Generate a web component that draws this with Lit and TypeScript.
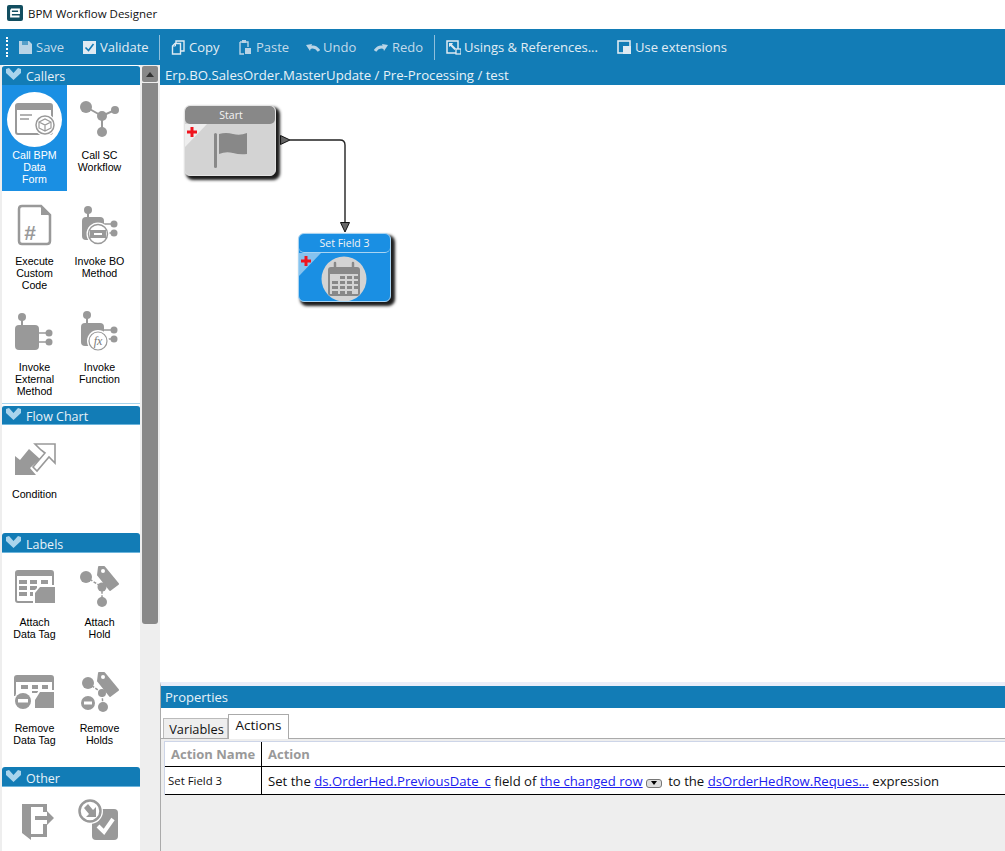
import { LitElement, html, css, svg } from 'lit';
import { customElement } from 'lit/decorators.js';
import { classMap } from 'lit/directives/class-map.js';

const G = '#999999';

// palette icons are drawn in page coordinates, the viewBox crops them to their cell
const pin = (px: number, py: number, x: number, y: number, w: number, h: number, oy: number) => svg`
  <circle cx=${px} cy=${py} r="4" fill=${G} />
  <path d="M${px} ${py} V${y}" stroke=${G} stroke-width="2" />
  <rect x=${x} y=${y} width=${w} height=${h} rx="4" fill=${G} />
  <path d="M${x + w} ${oy} H${x + w + 8} M${x + w} ${oy + 9} H${x + w + 8}" stroke=${G} stroke-width="1.5" />
  <circle cx=${x + w + 10} cy=${oy} r="3.5" fill=${G} />
  <circle cx=${x + w + 10} cy=${oy + 9} r="3.5" fill=${G} />
`;

const tag = (d: number) => svg`
  <path d="M99 ${567 + d} H104 L118 ${584 + d} L110 ${590 + d} L98 ${575 + d} Z" fill=${G} stroke=${G} stroke-width="2" stroke-linejoin="round" />
  <circle cx="103" cy=${571 + d} r="2" fill="#fff" />
`;

const ICONS: Record<string, unknown> = {
  form: svg`
    <circle cx="34.5" cy="119.5" r="27.5" fill="#fff" />
    <rect x="16" y="104" width="36" height="30" rx="2" fill="none" stroke=${G} stroke-width="2" />
    <rect x="16" y="104" width="36" height="6" fill=${G} />
    <path d="M20 115 H32 M20 119 H29" stroke=${G} stroke-width="1.5" />
    <circle cx="45" cy="125" r="11" fill="#fff" />
    <circle cx="45" cy="125" r="9" fill="#fff" stroke=${G} stroke-width="1.5" />
    <path d="M39 122 L45 119 L51 122 V128 L45 131 L39 128 Z M39 122 L45 125 L51 122 M45 125 V131" fill="none" stroke=${G} stroke-width="1.2" />
  `,
  workflow: svg`
    <path d="M86 107 L102 116 L115 110 M102 116 V132" stroke=${G} stroke-width="2" fill="none" />
    <circle cx="86" cy="107" r="6" fill=${G} />
    <circle cx="115" cy="110" r="4" fill=${G} />
    <circle cx="102" cy="116" r="5" fill=${G} />
    <circle cx="102" cy="132" r="5" fill=${G} />
  `,
  code: svg`
    <path d="M22 206 H41 L50 215 V241 Q50 244 47 244 H22 Q19 244 19 241 V209 Q19 206 22 206 Z" fill="none" stroke=${G} stroke-width="2.5" />
    <path d="M41 205 L51 215 H41 Z" fill=${G} />
    <text x="30" y="240" class="glyph" font-size="21" text-anchor="middle">#</text>
  `,
  bo: svg`
    ${pin(88, 210, 82, 217, 22, 23, 224)}
    <circle cx="98" cy="234" r="11.5" fill="#fff" />
    <circle cx="98" cy="234" r="9.5" fill="#fff" stroke=${G} stroke-width="1.5" />
    <rect x="90" y="230" width="16" height="8" fill=${G} />
    <rect x="94" y="233" width="8" height="2" fill="#fff" />
  `,
  external: svg`${pin(22, 317, 15, 325, 24, 25, 333)}`,
  fn: svg`
    ${pin(87, 315, 81, 323, 23, 23, 330)}
    <circle cx="98" cy="341" r="11" fill="#fff" />
    <circle cx="98" cy="341" r="9" fill="#fff" stroke=${G} stroke-width="1.2" />
    <text x="98" y="345" class="fx" font-size="12" text-anchor="middle">fx</text>
  `,
  condition: svg`
    <path d="M15 456 L20 460 L29 449 L40 459 L30 468 L36 475 H15 Z" fill=${G} />
    <path d="M41 450 L35 444 H55 V463 L49 457 L37 471 L33 467 L45 453 Z" fill="none" stroke=${G} stroke-width="1.6" />
  `,
  attachTag: svg`
    <rect x="16" y="571" width="37" height="31" rx="2" fill="none" stroke=${G} stroke-width="2" />
    <rect x="16" y="571" width="37" height="5" fill=${G} />
    <path d="M19 580 h8 v4 h-8 Z M30 580 h7 v4 h-7 Z M41 580 h7 v4 h-7 Z M19 586 h8 v4 h-8 Z M30 586 h7 v4 h-7 Z M19 592 h8 v4 h-8 Z M30 592 h4 v4 h-4 Z" fill=${G} />
    <path d="M33 604 V592 L40 585 H57 V604 Z" fill="#fff" />
    <path d="M35 603 V593 L40 587 H55 V603 Z" fill=${G} />
  `,
  attachHold: svg`
    <path d="M86 577 L102 587 V602" stroke=${G} stroke-width="1.5" stroke-dasharray="3 1.5" fill="none" />
    <circle cx="86" cy="577" r="6" fill=${G} />
    <circle cx="102" cy="587" r="4.5" fill=${G} />
    <circle cx="102" cy="602" r="5" fill=${G} />
    ${tag(0)}
  `,
  removeTag: svg`
    <path d="M15 696 V678 Q15 676 17 676 H51 Q53 676 53 678 V692" fill="none" stroke=${G} stroke-width="2" />
    <rect x="15" y="676" width="38" height="6" fill=${G} />
    <path d="M21 685 h7 v4 h-7 Z M32 685 h6 v4 h-6 Z M42 685 h6 v4 h-6 Z M32 691 h6 v2 h-6 Z" fill=${G} />
    <path d="M33 710 V699 L39 690 H56 V710 Z" fill="#fff" />
    <path d="M35 708 V700 L40 692 H54 V708 Z" fill=${G} />
    <circle cx="23" cy="701" r="9.5" fill="#fff" />
    <circle cx="23" cy="701" r="8" fill=${G} />
    <rect x="18" y="699" width="10" height="3.5" fill="#fff" />
  `,
  removeHold: svg`
    <path d="M88 683 L102 693 L103 707" stroke=${G} stroke-width="1.5" stroke-dasharray="3 1.5" fill="none" />
    <circle cx="88" cy="683" r="6" fill=${G} />
    <circle cx="102" cy="693" r="4" fill=${G} />
    <circle cx="103" cy="707" r="5" fill=${G} />
    ${tag(106)}
    <circle cx="88" cy="703" r="7" fill=${G} />
    <rect x="84" y="701.5" width="8" height="3" fill="#fff" />
  `,
  exit: svg`
    <path d="M22 804 H47 V812 H43 V807 H31 V834 H43 V824 H47 V837 H31 V840 L22 833 Z" fill=${G} />
    <path d="M35 816 H47 V811 L54 818 L47 825 V820 H35 Z" fill=${G} />
  `,
  validate: svg`
    <rect x="92" y="809" width="26" height="31" rx="4" fill=${G} />
    <path d="M98 826 L104 832 L113 819" fill="none" stroke="#fff" stroke-width="4" />
    <circle cx="90" cy="811" r="13" fill="#fff" />
    <circle cx="90" cy="811" r="10.5" fill="#fff" stroke=${G} stroke-width="2.5" />
    <path d="M84 808 L88 804 L93 810 L96 807 V817 H86 L89 814 Z" fill=${G} />
  `,
};

type Tool = { icon: string; label: string[]; selected?: boolean };

const GROUPS: { title: string; inset?: boolean; rule?: boolean; top: number; tools: Tool[] }[] = [
  {
    title: 'Callers', inset: true, rule: true, top: 85, tools: [
      { icon: 'form', label: ['Call BPM', 'Data', 'Form'], selected: true },
      { icon: 'workflow', label: ['Call SC', 'Workflow'] },
      { icon: 'code', label: ['Execute', 'Custom', 'Code'] },
      { icon: 'bo', label: ['Invoke BO', 'Method'] },
      { icon: 'external', label: ['Invoke', 'External', 'Method'] },
      { icon: 'fn', label: ['Invoke', 'Function'] },
    ],
  },
  {
    title: 'Flow Chart', inset: true, top: 425, tools: [
      { icon: 'condition', label: ['Condition'] },
    ],
  },
  {
    title: 'Labels', top: 553, tools: [
      { icon: 'attachTag', label: ['Attach', 'Data Tag'] },
      { icon: 'attachHold', label: ['Attach', 'Hold'] },
      { icon: 'removeTag', label: ['Remove', 'Data Tag'] },
      { icon: 'removeHold', label: ['Remove', 'Holds'] },
    ],
  },
  {
    title: 'Other', top: 787, tools: [
      { icon: 'exit', label: [] },
      { icon: 'validate', label: [] },
    ],
  },
];

const W = '#dfeaf2';
const M = '#b9d4e6'; // muted icons of the disabled buttons
const BUTTONS: { label: string; width: number; muted?: boolean; icon: unknown }[] = [
  {
    label: 'Save', width: 64, muted: true, icon: svg`
    <path d="M1 2 H11 L14 5 V15 H1 Z" fill=${M} />
    <rect x="4" y="2" width="6" height="4" fill="#127cb6" opacity=".6" />`,
  },
  {
    label: 'Validate', width: 77, icon: svg`
    <rect x="1" y="2" width="13" height="13" fill=${W} />
    <path d="M3.5 8.5 L6.5 11.5 L11.5 5" fill="none" stroke="#127cb6" stroke-width="1.6" />`,
  },
  {
    label: 'Copy', width: 67, icon: svg`
    <path d="M5 5 V2 H13 V12 H9" fill="none" stroke=${W} stroke-width="1.4" />
    <path d="M1.5 7 L4 4.5 H9.5 V15 H1.5 Z" fill="none" stroke=${W} stroke-width="1.4" />
    <path d="M2 7 H4.5 V4.5" fill="none" stroke=${W} />`,
  },
  {
    label: 'Paste', width: 67, muted: true, icon: svg`
    <path d="M2 3 H10 V8 M6 15 H2 V3" fill="none" stroke=${M} stroke-width="1.4" />
    <rect x="4" y="1" width="4" height="3" fill=${M} />
    <rect x="7" y="9" width="6" height="6" fill=${M} />`,
  },
  {
    label: 'Undo', width: 69, muted: true, icon: svg`
    <path d="M14 12 Q10 6 4 9" fill="none" stroke=${M} stroke-width="3" />
    <path d="M1 6 L7 5 L5 12 Z" fill=${M} />`,
  },
  {
    label: 'Redo', width: 60, muted: true, icon: svg`
    <path d="M1 12 Q5 6 11 9" fill="none" stroke=${M} stroke-width="3" />
    <path d="M14 6 L8 5 L10 12 Z" fill=${M} />`,
  },
  {
    label: 'Usings & References...', width: 171, icon: svg`
    <rect x="1" y="2" width="11" height="12" fill="none" stroke=${W} stroke-width="1.5" />
    <path d="M3 4 H7 L6 5.5 L10 9.5 L8.5 11 L4.5 7 L3 8 Z" fill=${W} />
    <rect x="10" y="10" width="5" height="5" fill="#127cb6" stroke=${W} stroke-width="1.3" />`,
  },
  {
    label: 'Use extensions', width: 120, icon: svg`
    <rect x="1" y="2" width="12" height="12" fill="none" stroke=${W} stroke-width="1.6" />
    <rect x="6" y="7" width="8" height="8" fill=${W} />`,
  },
];

const SEPARATOR_AFTER = ['Validate', 'Redo'];

const CHEVRON = html`<svg class="chevron" width="15" height="12" viewBox="0 0 15 12">
  <path d="M0 1 L3 0 L7.5 5 L12 0 L15 1 V5 L7.5 12 L0 5 Z" fill="#a9d4ec" />
</svg>`;

const PLUS = html`<svg class="plus" width="10" height="10" viewBox="0 0 10 10">
  <path d="M3.5 0 H6.5 V3.5 H10 V6.5 H6.5 V10 H3.5 V6.5 H0 V3.5 H3.5 Z" fill="#f0141e" />
</svg>`;

@customElement('app-root')
export class AppRoot extends LitElement {
  static styles = css`
    :host {
      display: flex;
      flex-direction: column;
      width: 1005px;
      height: 851px;
      overflow: hidden;
      background: #fff;
      font-family: 'Open Sans', sans-serif;
    }

    /* Title bar */
    .title {
      height: 29px;
      flex: none;
      display: flex;
      align-items: center;
      gap: 5px;
      padding: 0 0 3px 7px;
      box-sizing: border-box;
      font-size: 11.5px;
      color: #111;
    }

    /* Toolbar */
    .toolbar {
      height: 36px;
      flex: none;
      display: flex;
      align-items: center;
      background: #127cb6;
      color: #e3edf4;
      font-size: 13px;
      padding-left: 6px;
      box-sizing: border-box;
    }

    .grip {
      width: 2px;
      height: 20px;
      margin-right: 10px;
      border-left: 2px dotted #fff;
      box-sizing: border-box;
    }

    .tool-btn {
      display: flex;
      align-items: center;
      gap: 3px;
      flex: none;
      box-sizing: border-box;
      white-space: nowrap;
    }

    .tool-btn.muted {
      color: #c4dbea;
    }

    .tool-sep {
      width: 1px;
      height: 25px;
      background: #8fbfdc;
      flex: none;
      margin-right: 11px;
    }

    .main {
      flex: 1;
      display: flex;
      min-height: 0;
    }

    /* Left palette */
    .side {
      width: 160px;
      flex: none;
      display: flex;
      background: #eee;
      padding-left: 2px;
      box-sizing: border-box;
    }

    .palette {
      width: 138px;
      flex: none;
      background: #fff;
      overflow: hidden;
    }

    .group-head {
      height: 20px;
      box-sizing: border-box;
      display: flex;
      align-items: center;
      gap: 5px;
      padding: 3px 0 0 4px;
      background: #127cb6;
      border-radius: 3px 3px 0 0;
      border-bottom: 1px solid #6db5dc;
      color: #e8f2f8;
      font-size: 12.5px;
      margin-top: 2px;
    }

    .group-head.inset {
      border-top: 1px solid #fff;
      margin-top: 0;
      padding-top: 2px;
    }

    .group-head.first {
      border-bottom-color: #127cb6;
    }

    .group-head .chevron {
      margin-top: -4px;
    }

    .tools {
      display: grid;
      grid-template-columns: 65px 65px;
      grid-auto-rows: 106px;
      align-content: start;
    }

    .tools.rule {
      height: 318px;
      border-bottom: 1px solid #a9d4ec;
      box-sizing: content-box;
      margin-bottom: 1px;
    }

    .tool {
      display: flex;
      flex-direction: column;
      align-items: center;
      font-family: 'Liberation Sans', Arial, sans-serif;
      font-size: 10.67px;
      line-height: 12px;
      color: #000;
      text-align: center;
    }

    .tool.selected {
      background: #1a8fe3;
      color: #fff;
    }

    .tool svg {
      display: block;
      flex: none;
    }

    .glyph {
      font-family: 'Liberation Sans', sans-serif;
      font-weight: 700;
      fill: #999;
    }

    .fx {
      font-family: 'Liberation Serif', serif;
      font-style: italic;
      fill: #777;
    }

    .scroll {
      width: 16px;
      flex: none;
      margin: 1px 0 0 2px;
      display: flex;
      flex-direction: column;
      gap: 1px;
    }

    .scroll-up {
      height: 16px;
      background: #888;
      border-radius: 2px;
      display: flex;
      align-items: center;
      justify-content: center;
    }

    .scroll-up i {
      border: 4px solid transparent;
      border-top: 0;
      border-bottom: 5px solid #333;
    }

    .scroll-thumb {
      height: 541px;
      background: #888;
      border-radius: 0 0 3px 3px;
    }

    /* Right side */
    .right {
      flex: 1;
      display: flex;
      flex-direction: column;
      min-width: 0;
    }

    .crumb {
      height: 20px;
      flex: none;
      background: #127cb6;
      color: #e8f2f8;
      font-size: 13.2px;
      line-height: 20px;
      padding-left: 5px;
      white-space: nowrap;
    }

    .canvas {
      flex: 1;
      position: relative;
      background: #fff;
      border-left: 1px solid #fff;
    }

    .node {
      position: absolute;
      width: 92px;
      box-sizing: border-box;
      border-radius: 6px;
      box-shadow: 3px 3px 3px 1px #1c1c1c;
      overflow: hidden;
      font-size: 10.5px;
      color: #f4f4f4;
      text-align: center;
    }

    .node-head {
      height: 18px;
      line-height: 18px;
      border-radius: 5px;
    }

    .node-body {
      position: relative;
    }

    .fold {
      position: absolute;
      left: 0;
      top: 0;
      width: 0;
      height: 0;
      border-style: solid;
      border-width: 23px 22px 0 0;
      border-color: #eee transparent transparent transparent;
    }

    .plus {
      position: absolute;
      left: 2px;
      top: 3px;
    }

    .node-art {
      position: absolute;
      left: 0;
      top: 0;
    }

    .node.start {
      left: 23px;
      top: 20px;
      height: 71px;
      background: #d3d3d3;
      border: 1px solid #e4e4e4;
    }

    .node.start .node-head {
      background: #888;
      padding-left: 2px;
    }

    .node.set {
      left: 137px;
      top: 148px;
      width: 93px;
      height: 69px;
      background: #1a8fe3;
      border: 1px solid #a9d4f2;
    }

    .node.set .node-head {
      height: 19px;
      line-height: 19px;
      border-bottom: 1px solid #a9d4f2;
      box-sizing: border-box;
    }

    .node.set .fold {
      border-top-color: #86c3ef;
    }

    .wire {
      position: absolute;
      left: 115px;
      top: 45px;
    }

    /* Properties */
    .props {
      height: 169px;
      flex: none;
      display: flex;
      flex-direction: column;
      border-top: 4px solid #e9edf9;
      box-sizing: border-box;
      background: #eee;
      border-left: 1px solid #aaa;
    }

    .props-head {
      height: 22px;
      flex: none;
      background: #127cb6;
      color: #e8f2f8;
      font-size: 13px;
      line-height: 22px;
      padding-left: 4px;
    }

    .tabs {
      height: 31px;
      flex: none;
      box-sizing: border-box;
      background: #fff;
      border-bottom: 1px solid #aaa;
      display: flex;
      align-items: flex-end;
      padding-left: 2px;
      font-size: 12.8px;
      color: #111;
    }

    .tab {
      height: 20px;
      width: 65px;
      padding-left: 2px;
      box-sizing: border-box;
      background: #eee;
      border: 1px solid #bbb;
      border-bottom: 0;
      text-align: center;
      line-height: 20px;
    }

    .tab.active {
      height: 25px;
      width: 61px;
      padding-left: 0;
      background: #fff;
      border-color: #aaa;
      font-size: 13.5px;
      line-height: 21px;
      margin-bottom: -1px;
    }

    .grid {
      flex: none;
      margin-top: 2px;
      background: #fff;
      border-top: 1px solid #cdd5e8;
      border-left: 1px solid #cdd5e8;
      margin-left: 3px;
      display: grid;
      grid-template-columns: 97px 1fr;
      grid-template-rows: 25px 28px;
    }

    .cell {
      white-space: nowrap;
      display: flex;
      align-items: center;
      box-sizing: border-box;
      border-bottom: 1px solid #000;
      color: #111;
      font-size: 13px;
      overflow: hidden;
    }

    .cell.name {
      border-right: 1px solid #000;
      padding-left: 6px;
    }

    .cell.head {
      font-weight: 700;
      color: #999;
    }

    .cell.value {
      padding-left: 6px;
    }

    .cell.text {
      font-size: 13.15px;
    }

    .cell.small {
      font-size: 11.4px;
      padding-left: 3px;
    }

    .cell a {
      color: #2020ee;
      text-decoration: underline;
      margin: 0 3.5px;
    }

    .drop {
      width: 16px;
      height: 9px;
      margin: 5px 6px 0 0;
      background: #ddd;
      border: 1px solid #777;
      border-radius: 3px;
      box-sizing: border-box;
      display: flex;
      align-items: center;
      justify-content: center;
      flex: none;
    }

    .drop i {
      border: 3px solid transparent;
      border-bottom: 0;
      border-top: 4px solid #000;
    }
  `;

  private renderTool(t: Tool, index: number, top: number, iconHeight: number) {
    const x = index % 2 === 0 ? 2 : 67;
    const y = top + Math.floor(index / 2) * 106;
    return html`
      <div class=${classMap({ tool: true, selected: !!t.selected })}>
        <svg width="65" height=${iconHeight} viewBox="${x} ${y} 65 ${iconHeight}">${ICONS[t.icon]}</svg>
        ${t.label.map((line) => html`<div>${line}</div>`)}
      </div>
    `;
  }

  render() {
    return html`
      <div class="title">
        <svg width="16" height="16" viewBox="0 0 16 16">
          <rect width="16" height="16" rx="2" fill="#124e60" />
          <path d="M13 8 H4 M4 4.5 H12 V8 M4 4.5 V11.5 H12.5" fill="none" stroke="#fff" stroke-width="1.8" />
        </svg>
        <span>BPM Workflow Designer</span>
      </div>

      <div class="toolbar">
        <div class="grip"></div>
        ${BUTTONS.map((b) => html`
          <div class=${classMap({ 'tool-btn': true, muted: !!b.muted })} style="width:${b.width}px">
            <svg width="15" height="16" viewBox="0 0 15 16">${b.icon}</svg>
            <span>${b.label}</span>
          </div>
          ${SEPARATOR_AFTER.includes(b.label) ? html`<div class="tool-sep"></div>` : ''}
        `)}
      </div>

      <div class="main">
        <div class="side">
          <div class="palette">
            ${GROUPS.map((g, i) => html`
              <div class=${classMap({ 'group-head': true, inset: !!g.inset, first: i === 0 })}>${CHEVRON}<span>${g.title}</span></div>
              <div class=${classMap({ tools: true, rule: !!g.rule })}>
                ${g.tools.map((t, n) => this.renderTool(t, n, g.top, g.rule ? 64 : 63))}
              </div>
            `)}
          </div>
          <div class="scroll">
            <div class="scroll-up"><i></i></div>
            <div class="scroll-thumb"></div>
          </div>
        </div>

        <div class="right">
          <div class="crumb">Erp.BO.SalesOrder.MasterUpdate / Pre-Processing / test</div>

          <div class="canvas">
            <svg class="wire" width="80" height="110" viewBox="0 0 80 110">
              <path d="M14 10 H64 Q69 10 69 15 V93" fill="none" stroke="#222" stroke-width="1.4" />
              <path d="M4.5 5.5 L14 10 L4.5 14.5 Z" fill="#666" stroke="#111" />
              <path d="M64.5 92.5 H73.5 L69 102 Z" fill="#666" stroke="#111" />
            </svg>

            <div class="node start">
              <div class="node-head">Start</div>
              <div class="node-body">
                <div class="fold"></div>
                ${PLUS}
                <svg class="node-art" width="90" height="52" viewBox="0 0 90 52">
                  <rect x="29" y="9" width="3" height="35" rx="1.5" fill="#888" />
                  <path d="M34 10 Q41 8 48 10 T62 9 V30 Q55 31 48 29 T34 30 Z" fill="#888" />
                </svg>
              </div>
            </div>

            <div class="node set">
              <div class="node-head">Set Field 3</div>
              <div class="node-body">
                <div class="fold"></div>
                ${PLUS}
                <svg class="node-art" width="91" height="50" viewBox="0 0 91 50">
                  <circle cx="45" cy="26" r="22.5" fill="#d3d3d3" />
                  <rect x="29" y="14" width="32" height="29" rx="3" fill="#888" />
                  <rect x="31" y="21" width="28" height="20" fill="#d3d3d3" />
                  <path d="M36 10 V17 M54 10 V17" stroke="#888" stroke-width="2.5" stroke-linecap="round" />
                  <path d="M41 23 h5 v3 h-5 Z M48 23 h5 v3 h-5 Z M55 23 h4 v3 h-4 Z M33 28 h6 v3 h-6 Z M41 28 h5 v3 h-5 Z M48 28 h5 v3 h-5 Z M55 28 h4 v3 h-4 Z M33 33 h6 v3 h-6 Z M41 33 h5 v3 h-5 Z M48 33 h5 v3 h-5 Z M55 33 h4 v3 h-4 Z M33 38 h6 v3 h-6 Z M41 38 h5 v3 h-5 Z M48 38 h5 v3 h-5 Z" fill="#888" />
                </svg>
              </div>
            </div>
          </div>

          <div class="props">
            <div class="props-head">Properties</div>
            <div class="tabs">
              <div class="tab">Variables</div>
              <div class="tab active">Actions</div>
            </div>
            <div class="grid">
              <div class="cell name head">Action Name</div>
              <div class="cell value head">Action</div>
              <div class="cell name small">Set Field 3</div>
              <div class="cell value text">
                Set the <a>ds.OrderHed.PreviousDate_c</a> field of <a>the changed row</a>
                <span class="drop"><i></i></span>
                to the <a>dsOrderHedRow.Reques...</a> expression
              </div>
            </div>
          </div>
        </div>
      </div>
    `;
  }
}
